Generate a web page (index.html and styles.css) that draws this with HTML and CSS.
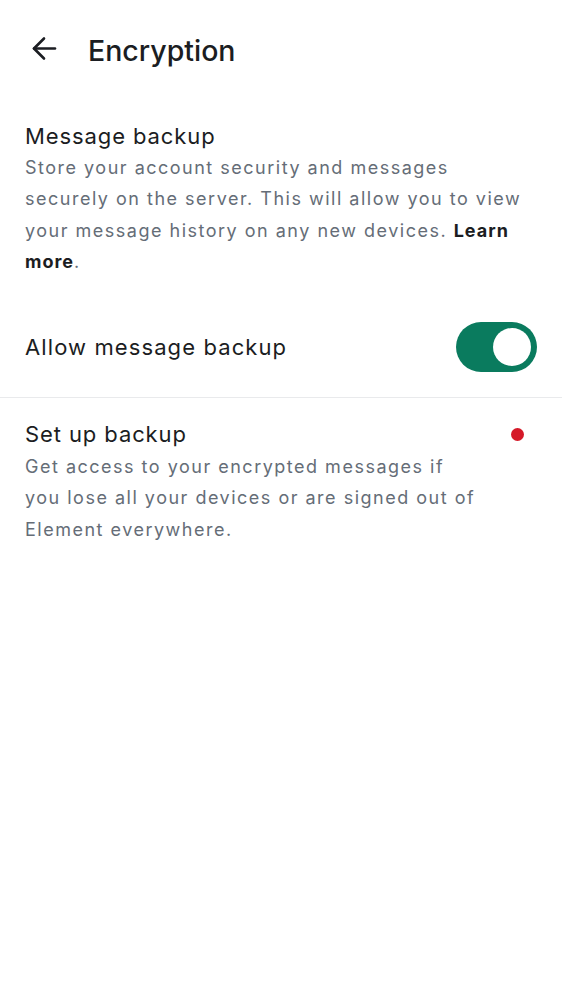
FILE: index.html
```html
<!DOCTYPE html>
<html lang="en">
<head>
<meta charset="utf-8">
<link rel="stylesheet" href="styles.css">
</head>
<body>
<header class="topbar">
  <button class="back" aria-label="Back">
    <svg width="30" height="30" viewBox="0 0 30 30" fill="none" stroke="#1b1d22" stroke-width="2.6" stroke-linecap="round" stroke-linejoin="round">
      <path d="M4 14.5H25"/>
      <path d="M14 4.5L4 14.5L14 24.5"/>
    </svg>
  </button>
  <h1 class="title">Encryption</h1>
</header>

<section class="block intro">
  <div class="item-title">Message backup</div>
  <p class="item-desc">Store your account security and messages securely on the server. This will allow you to view your message history on any new devices. <a class="link" href="#">Learn more</a>.</p>
</section>

<div class="toggle-row">
  <span class="toggle-label">Allow message backup</span>
  <span class="switch on"><span class="thumb"></span></span>
</div>

<div class="divider"></div>

<section class="block setup">
  <div class="setup-text">
    <div class="item-title">Set up backup</div>
    <p class="item-desc">Get access to your encrypted messages if you lose all your devices or are signed out of Element everywhere.</p>
  </div>
  <div class="trailing"><span class="dot"></span></div>
</section>
</body>
</html>
```

FILE: styles.css
```css
* { box-sizing: border-box; }
html, body { margin: 0; padding: 0; background: #ffffff; }
body {
  font-family: Inter, Roboto, sans-serif;
  color: #1b1d22;
  width: 562px;
}
.topbar {
  height: 100px;
  display: flex;
  align-items: center;
  padding-left: 30px;
}
.back {
  border: 0;
  background: none;
  padding: 0;
  width: 30px;
  height: 30px;
  display: flex;
  margin-right: 28px;
  margin-top: -2px;
}
.title {
  margin: 0;
  font-weight: 500;
  font-size: 28.5px;
  color: #1b1d22;
}
.block {
  padding: 20px 25px 0 25px;
}
.intro {
  padding-right: 40px;
  padding-bottom: 20px;
}
.item-title {
  font-size: 22px;
  line-height: 32px;
  letter-spacing: 0.9px;
  color: #1b1d22;
}
.item-desc {
  margin: 0;
  font-size: 18px;
  line-height: 31.3px;
  letter-spacing: 1.5px;
  color: #656d77;
}
.link {
  color: #1b1d22;
  font-weight: 700;
  letter-spacing: 1px;
  text-decoration: none;
}
.toggle-row {
  display: flex;
  align-items: center;
  justify-content: space-between;
  padding: 25px;
}
.toggle-label {
  font-size: 22px;
  line-height: 32px;
  letter-spacing: 1.1px;
}
.switch {
  width: 81px;
  height: 50px;
  border-radius: 25px;
  background: #0a7b5e;
  display: flex;
  align-items: center;
  justify-content: flex-end;
  padding: 0 6px;
}
.thumb {
  width: 38px;
  height: 38px;
  border-radius: 50%;
  background: #ffffff;
}
.divider {
  height: 1px;
  background: #e9eaec;
}
.setup {
  display: flex;
  padding-right: 38px;
}
.setup-text { flex: 1; min-width: 0; }
.setup .item-desc { margin-top: 1px; }
.trailing {
  width: 44px;
  display: flex;
  justify-content: flex-end;
  align-items: flex-start;
}
.dot {
  width: 13px;
  height: 13px;
  border-radius: 50%;
  background: #d51928;
  margin-top: 10px;
}
```
